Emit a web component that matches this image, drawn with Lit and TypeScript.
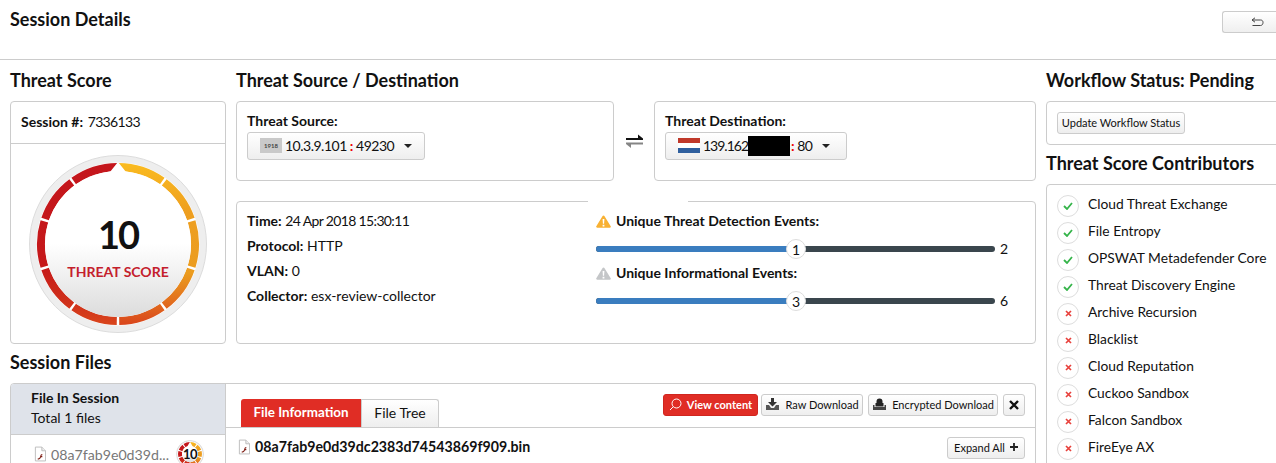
import { LitElement, html, css, svg } from "lit";
import { customElement } from "lit/decorators.js";

const rad = (d: number) => ((d - 90) * Math.PI) / 180;
const pt = (r: number, d: number, c: number) => `${(c + r * Math.cos(rad(d))).toFixed(2)} ${(c + r * Math.sin(rad(d))).toFixed(2)}`;

function sector(c: number, ro: number, ri: number, oa: number, ob: number, ia: number, ib: number) {
  return `M${pt(ro, oa, c)} A${ro} ${ro} 0 0 1 ${pt(ro, ob, c)} L${pt(ri, ib, c)} A${ri} ${ri} 0 0 0 ${pt(ri, ia, c)} Z`;
}

function gauge(size: number, id: string, ro: number, ri: number, gap: number, notch: number) {
  const c = size / 2;
  const segs = [];
  for (let i = 0; i < 10; i++) {
    const a = i * 36;
    const b = a + 36;
    const oa = i === 0 ? a + 0.6 : a + gap;
    const ob = i === 9 ? b - 0.6 : b - gap;
    const ia = i === 0 ? a + notch : a + gap;
    const ib = i === 9 ? b - notch : b - gap;
    segs.push(svg`<path d=${sector(c, ro, ri, oa, ob, ia, ib)} fill=${i < 5 ? `url(#${id}r)` : `url(#${id}l)`}></path>`);
  }
  return html`<svg width=${size} height=${size} viewBox="0 0 ${size} ${size}" class="gauge-svg">
    <defs>
      <linearGradient id="${id}r" gradientUnits="userSpaceOnUse" x1="0" y1="${c - ro}" x2="0" y2="${c + ro}">
        <stop offset="0" stop-color="#fabb1f"></stop><stop offset=".3" stop-color="#ee9f20"></stop>
        <stop offset=".68" stop-color="#eb9c1f"></stop><stop offset=".85" stop-color="#e2701e"></stop>
        <stop offset="1" stop-color="#d9451c"></stop>
      </linearGradient>
      <linearGradient id="${id}l" gradientUnits="userSpaceOnUse" x1="0" y1="${c - ro}" x2="0" y2="${c + ro}">
        <stop offset="0" stop-color="#c4161c"></stop><stop offset=".62" stop-color="#c5181a"></stop>
        <stop offset=".85" stop-color="#cf2f1a"></stop><stop offset="1" stop-color="#d9451c"></stop>
      </linearGradient>
      <linearGradient id="${id}i" x1="0" y1="0" x2="0" y2="1">
        <stop offset=".5" stop-color="#fff"></stop><stop offset="1" stop-color="#dcdcdc"></stop>
      </linearGradient>
    </defs>
    <circle cx=${c} cy=${c} r=${c - 0.5} fill="#eeeeee" stroke="#dcdcdc"></circle>
    <circle cx=${c} cy=${c} r=${ro + 0.5} fill="#fff"></circle>
    ${segs}
    <circle cx=${c} cy=${c} r=${ri} fill="url(#${id}i)"></circle>
  </svg>`;
}

const fileIcon = html`<svg class="file-ic" width="12" height="16" viewBox="0 0 13 16">
  <path d="M1.500.5h7l4 4v11h-11z" fill="#fff" stroke="#bbb"></path>
  <path d="M8.500.5v4h4" fill="#eee" stroke="#bbb"></path>
  <path d="M4 13c2 0 2.400-1.300 2.900-3 .3-1.200.8-1.900 2.100-2v1.300c-.8.1-1 .5-1.100 1h1.100v1.200H7.600C7 13 5.800 14 4 14z" fill="#7d1b12"></path>
</svg>`;

const warn = (color: string) => html`<svg class="warn" width="15" height="13" viewBox="0 0 15 13">
  <path d="M7.500.4c.4 0 .7.2.9.5l6.300 10.400c.4.700 0 1.500-.9 1.500H1.200c-.9 0-1.300-.8-.9-1.500L6.600.9c.2-.3.500-.5.900-.5z" fill=${color}></path>
  <path d="M6.600 4h1.800l-.3 4.800H6.900zM6.600 9.700h1.800v1.700H6.600z" fill="#fff"></path>
</svg>`;

const caret = html`<svg class="caret" width="8" height="4" viewBox="0 0 8 4"><path d="M0 0h8L4 4z" fill="#222"></path></svg>`;

const ok = ["Cloud Threat Exchange", "File Entropy", "OPSWAT Metadefender Core", "Threat Discovery Engine"];
const bad = ["Archive Recursion", "Blacklist", "Cloud Reputation", "Cuckoo Sandbox", "Falcon Sandbox", "FireEye AX"];

@customElement("app-root")
export class AppRoot extends LitElement {
  static styles = css`
    :host { display: block; width: 1276px; height: 463px; overflow: hidden; background: #fff; color: #111;
      font-family: Lato, "Noto Sans", sans-serif; font-size: 14px; }
    * { box-sizing: border-box; }
    b { font-weight: 700; }
    .top { height: 60px; border-bottom: 1px solid #ccc; padding: 10px 0 0 10px; display: flex; justify-content: space-between; }
    .title { font-size: 18px; font-weight: 700; line-height: 18px; }
    .back { width: 70px; height: 22px; margin: 1px -16px 0 0; border: 1px solid #ccc; border-right: 0; border-radius: 3px 0 0 3px;
      background: linear-gradient(#fff, #efefef); display: flex; align-items: center; justify-content: center; }
    .main { display: flex; padding-left: 10px; gap: 10px; width: 1400px; }
    .left { width: 1026px; flex: none; }
    .upper { display: flex; gap: 10px; }
    h2 { margin: 0; font-size: 18px; line-height: 20px; font-weight: 700; padding: 10px 0 0; height: 41px; }
    .card { border: 1px solid #ccc; border-radius: 4px; background: #fff; }
    .score-col { width: 216px; flex: none; }
    .score-card { height: 243px; }
    .session { height: 42px; border-bottom: 1px solid #ccc; padding: 0 10px 3px; display: flex; align-items: center; }
    .num { letter-spacing: -0.65px; }
    .session .num { margin-left: 1px; }
    .gauge-wrap { position: relative; width: 178px; height: 178px; margin: 11px 0 0 18px; }
    .gauge-svg { display: block; }
    .gauge-text { position: absolute; left: 0; right: 0; top: 57px; text-align: center; }
    .big { font-size: 38px; line-height: 44px; font-weight: 700; color: #111; letter-spacing: -2px; }
    .ts { font-size: 14px; line-height: 18px; font-weight: 700; color: #c4202c; margin-top: 7px; }
    .mid { width: 800px; flex: none; }
    .ends { display: flex; align-items: stretch; height: 80px; }
    .end { flex: 1; padding: 10px 10px 0; }
    .end.src { flex: 0 0 378px; }
    .label { font-weight: 700; line-height: 18px; }
    .swap { width: 40px; display: flex; align-items: center; justify-content: center; padding-bottom: 1px; }
    .sel { display: inline-flex; align-items: center; height: 28px; margin-top: 2px; border: 1px solid #ccc; border-radius: 3px;
      background: linear-gradient(#fff, #eee); font-size: 14px; letter-spacing: -0.5px; padding: 0 0 1px 12px; }
    .sel.a { width: 178px; }
    .sel.b { width: 182px; }
    .chip { width: 22px; height: 15px; flex: none; background: #c9c9c9; color: #444; font-size: 6px; font-weight: 700; text-align: center;
      line-height: 15px; margin-right: 3px; letter-spacing: 0; }
    .flag { width: 22px; height: 15px; flex: none; margin-right: 3px; background: linear-gradient(#c0392b 0 5px, #fff 5px 10px, #2f5f9e 10px); }
    .colon { color: #e00; font-weight: 700; }
    .ip { letter-spacing: -1px; }
    .redact { display: inline-block; width: 42px; height: 20px; background: #000; margin-right: 1px; flex: none; }
    .caret { margin-left: 10px; flex: none; }
    .details { height: 143px; margin-top: 20px; position: relative; display: flex; padding: 10px 10px 0; }
    .details::before { content: ""; position: absolute; top: -1px; left: 351px; width: 100px; height: 1px; background: #fff; }
    .facts { width: 349px; flex: none; margin-top: -1px; }
    .facts div { height: 25px; line-height: 20px; }
    .events { flex: 1; margin-top: -2px; }
    .ev-label { display: flex; align-items: center; gap: 5px; height: 20px; font-weight: 700; }
    .warn { margin-top: 3px; flex: none; }
    .slider { display: flex; align-items: center; height: 32px; gap: 5px; margin: 3px 0 -3px; }
    .slider > span { padding-bottom: 2px; }
    .bar { position: relative; width: 399px; height: 6px; border-radius: 3px; background: #3a464d; }
    .fill { height: 6px; border-radius: 3px 0 0 3px; background: #3a7dbf; }
    .thumb { position: absolute; top: -7px; width: 20px; height: 20px; margin-left: -10px; border-radius: 50%; border: 1px solid #ddd;
      background: #fff; text-align: center; line-height: 20px; font-size: 14px; }
    .h-files { height: 39px; padding-top: 8px; }
    .files { width: 1026px; height: 200px; display: flex; }
    .files-left { width: 215px; flex: none; border-right: 1px solid #ccc; }
    .fl-head { height: 51px; background: #dfe3ea; border-bottom: 1px solid #ccc; padding: 4px 0 0 20px; border-radius: 3px 0 0 0; }
    .fl-head div { line-height: 20px; }
    .fl-row { display: flex; align-items: center; padding: 5px 0 0 23px; color: #777; font-size: 14.200px; }
    .fl-row .file-ic { margin-right: 5px; flex: none; }
    .fl-row span { width: 125px; flex: none; white-space: nowrap; }
    .mini { position: relative; width: 28px; height: 28px; flex: none; }
    .mini div { position: absolute; inset: 0; text-align: center; line-height: 28px; font-size: 13px; font-weight: 700; color: #111; letter-spacing: -0.5px; }
    .files-right { flex: 1; }
    .tabbar { height: 44px; border-bottom: 1px solid #ccc; display: flex; align-items: flex-end; padding: 0 10px 0 15px; position: relative; }
    .tab { height: 28px; display: flex; align-items: center; justify-content: center; font-size: 14px; padding-bottom: 2px; }
    .tab.on { width: 120px; background: #e02d25; color: #fff; font-weight: 700; font-size: 13.400px; border-radius: 3px 0 0 0; }
    .tab.off { width: 78px; border: 1px solid #ccc; border-bottom: 0; border-radius: 0 3px 0 0; background: linear-gradient(#fff, #eee); }
    .tools { margin-left: auto; display: flex; gap: 3px; align-self: flex-start; padding-top: 10px; }
    .btn { height: 22px; border: 1px solid #ccc; border-radius: 3px; background: linear-gradient(#fff, #eee); font-size: 11px;
      display: flex; align-items: center; justify-content: center; gap: 5px; white-space: nowrap; padding-bottom: 2px; }
    .btn.view { width: 95px; background: #e02d25; border-color: #d0261f; color: #fff; font-weight: 700; }
    .btn.raw { width: 102px; }
    .btn.enc { width: 130px; margin-left: 2px; }
    .btn.x { width: 22px; margin-left: 2px; padding-bottom: 0; }
    .file-line { display: flex; justify-content: space-between; align-items: center; padding: 9px 10px 0 12px; }
    .fname { display: flex; align-items: center; gap: 5px; font-weight: 700; font-size: 14.200px; margin-bottom: 3px; }
    .btn.expand { width: 78px; }
    .right { width: 300px; flex: none; }
    .wf-card { height: 44px; padding: 10px; }
    .btn.update { width: 128px; }
    .h-contrib { height: 39px; padding-top: 8px; }
    .contrib { padding: 7px 10px; height: 300px; font-size: 13.800px; }
    .row { display: flex; align-items: center; gap: 9px; height: 27px; }
    .row .t { padding-bottom: 5px; }
    .dot { width: 22px; height: 22px; border-radius: 50%; border: 1px solid #ddd; display: flex; align-items: center; justify-content: center; flex: none; }
  `;

  private slider(value: number, total: number) {
    return html`<div class="slider">
      <div class="bar">
        <div class="fill" style="width:${(192 / 399) * 100}%"></div>
        <div class="thumb" style="left:${(200 / 399) * 100}%">${value}</div>
      </div>
      <span>${total}</span>
    </div>`;
  }

  render() {
    return html`
      <div class="top">
        <div class="title">Session Details</div>
        <div class="back"><svg width="13" height="10" viewBox="0 0 13 10" fill="none" stroke="#444"><path d="M4 .8 1 3l3 2.200M1 3h8.500C11 3 12 3.800 12 5.500S11 8.500 9.500 8.500H1.500"></path></svg></div>
      </div>
      <div class="main">
        <div class="left">
          <div class="upper">
            <section class="score-col">
              <h2>Threat Score</h2>
              <div class="card score-card">
                <div class="session"><span><b>Session #:</b> <span class="num">7336133</span></span></div>
                <div class="gauge-wrap">
                  ${gauge(178, "g", 81, 73, 0.9, 6)}
                  <div class="gauge-text"><div class="big">10</div><div class="ts">THREAT SCORE</div></div>
                </div>
              </div>
            </section>
            <section class="mid">
              <h2>Threat Source / Destination</h2>
              <div class="ends">
                <div class="card end src">
                  <div class="label">Threat Source:</div>
                  <div class="sel a"><span class="chip">1918</span>10.3.9.101&nbsp;<span class="colon">:</span>&nbsp;49230${caret}</div>
                </div>
                <div class="swap"><svg width="17" height="16" viewBox="0 0 17 16"><path d="M0 5h12V1.500L17 5.500V7H0z" fill="#111"></path><path d="M17 9.500H0V11l5 4v-3.500h12z" fill="#858585"></path></svg></div>
                <div class="card end">
                  <div class="label">Threat Destination:</div>
                  <div class="sel b"><span class="flag"></span><span class="ip">139.162</span><span class="redact"></span><span class="colon">:</span>&nbsp;80${caret}</div>
                </div>
              </div>
              <div class="card details">
                <div class="facts">
                  <div><b>Time:</b> <span class="num">24 Apr 2018 15:30:11</span></div>
                  <div><b>Protocol:</b> HTTP</div>
                  <div><b>VLAN:</b> 0</div>
                  <div><b>Collector:</b> esx-review-collector</div>
                </div>
                <div class="events">
                  <div class="ev-label">${warn("#f8b133")}Unique Threat Detection Events:</div>
                  ${this.slider(1, 2)}
                  <div class="ev-label">${warn("#c4c6c8")}Unique Informational Events:</div>
                  ${this.slider(3, 6)}
                </div>
              </div>
            </section>
          </div>
          <h2 class="h-files">Session Files</h2>
          <div class="card files">
            <div class="files-left">
              <div class="fl-head"><div><b>File In Session</b></div><div>Total 1 files</div></div>
              <div class="fl-row">${fileIcon}<span>08a7fab9e0d39d...</span>
                <div class="mini">${gauge(28, "m", 12, 8, 3, 20)}<div>10</div></div>
              </div>
            </div>
            <div class="files-right">
              <div class="tabbar">
                <div class="tab on">File Information</div>
                <div class="tab off">File Tree</div>
                <div class="tools">
                  <div class="btn view"><svg width="13" height="13" viewBox="0 0 13 13" fill="none" stroke="#fff"><circle cx="7.500" cy="5.500" r="4.500"></circle><path d="M4.300 8.700 1 12"></path></svg>View content</div>
                  <div class="btn raw"><svg width="15" height="12" viewBox="0 0 15 12"><path d="M6 0h3v4h3L7.500 8.500 3 4h3z" fill="#333"></path><path d="M1 7h3l2 3h3l2-3h3v5H1z" fill="#555"></path></svg>Raw Download</div>
                  <div class="btn enc"><svg width="15" height="12" viewBox="0 0 15 12"><path d="M4.500 5V3.500a3 3 0 0 1 6 0V5h1v3.500h-8V5z" fill="#222"></path><path d="M1 7h1.500v2h10V7H14v5H1z" fill="#444"></path></svg>Encrypted Download</div>
                  <div class="btn x"><svg width="10" height="10" viewBox="0 0 10 10" stroke="#111" stroke-width="2.400"><path d="M1 1l8 8M9 1 1 9"></path></svg></div>
                </div>
              </div>
              <div class="file-line">
                <div class="fname">${fileIcon}08a7fab9e0d39dc2383d74543869f909.bin</div>
                <div class="btn expand">Expand All<svg width="8" height="8" viewBox="0 0 8 8" stroke="#222" stroke-width="1.800"><path d="M4 0v8M0 4h8"></path></svg></div>
              </div>
            </div>
          </div>
        </div>
        <div class="right">
          <h2>Workflow Status: Pending</h2>
          <div class="card wf-card"><div class="btn update">Update Workflow Status</div></div>
          <h2 class="h-contrib">Threat Score Contributors</h2>
          <div class="card contrib">
            ${ok.map((t) => html`<div class="row"><span class="dot"><svg width="10" height="8" viewBox="0 0 10 8" fill="none" stroke="#35b44a" stroke-width="1.800"><path d="M1 4l3 3 5-6"></path></svg></span><span class="t">${t}</span></div>`)}
            ${bad.map((t) => html`<div class="row"><span class="dot"><svg width="7" height="7" viewBox="0 0 7 7" fill="none" stroke="#e8413c" stroke-width="1.700"><path d="M1 1l5 5M6 1 1 6"></path></svg></span><span class="t">${t}</span></div>`)}
          </div>
        </div>
      </div>
    `;
  }
}
